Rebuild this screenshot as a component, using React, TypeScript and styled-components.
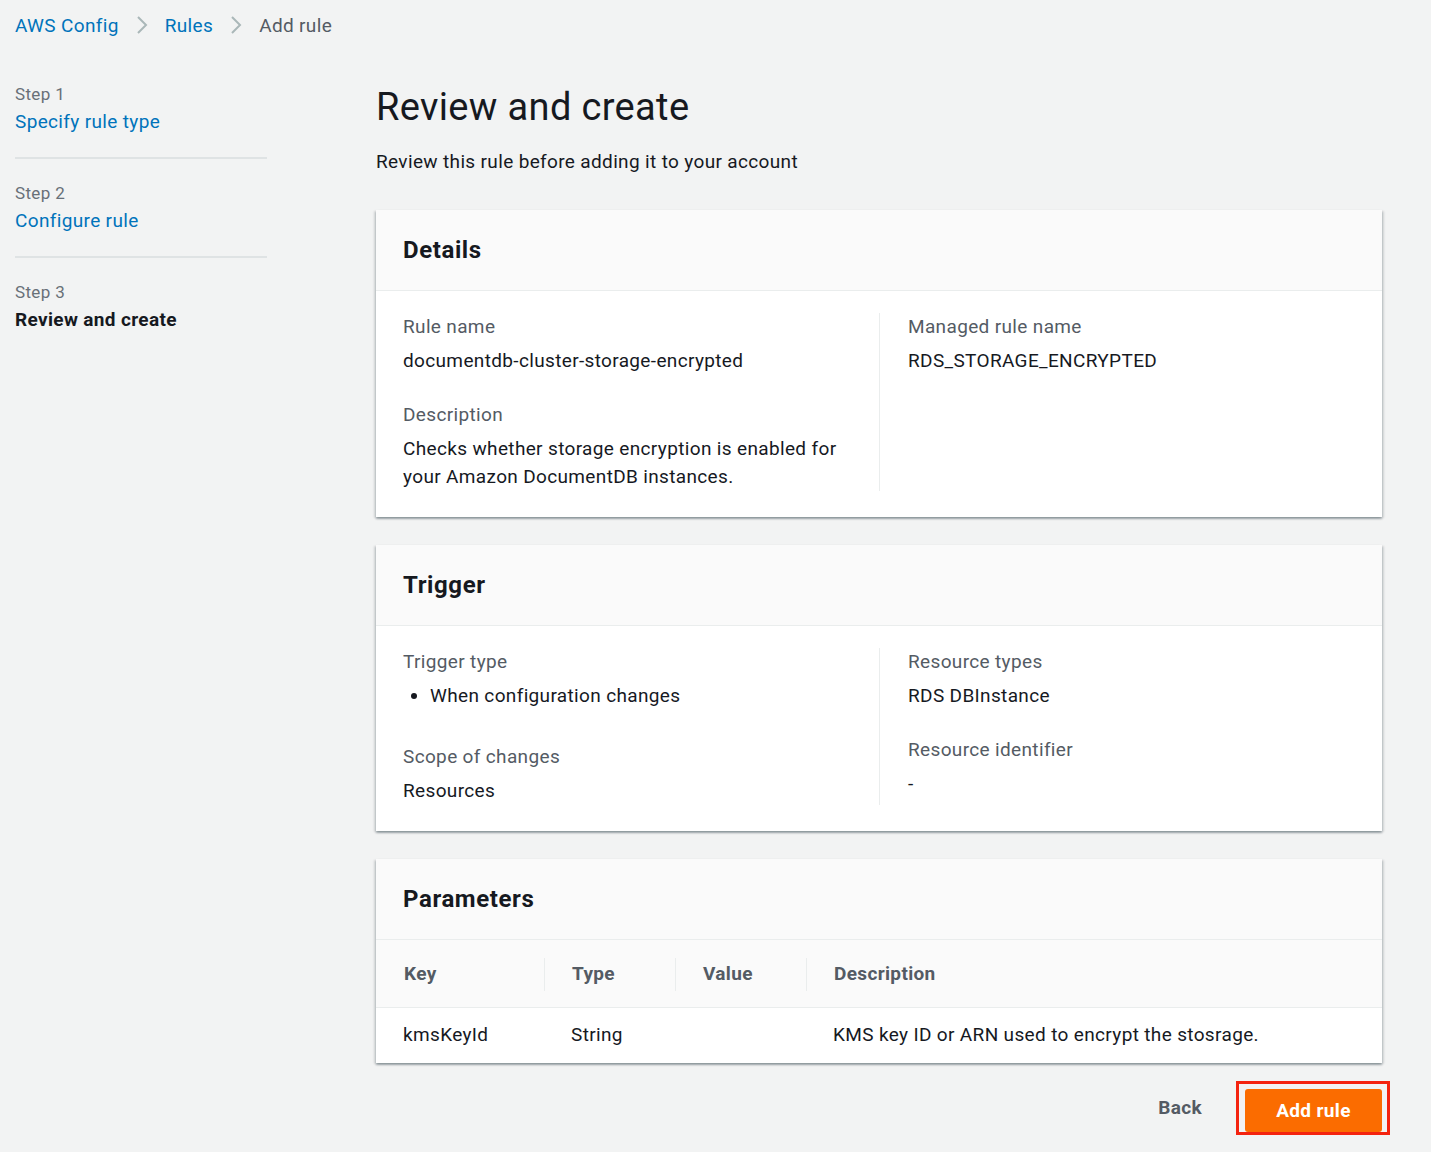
import styled, { createGlobalStyle } from 'styled-components';

const GlobalStyle = createGlobalStyle`
	body {
		margin: 0;
		background: #f2f3f3;
		font-family: Roboto, 'Liberation Sans', sans-serif;
		color: #16191f;
		letter-spacing: 0.35px;
	}
`;

const Page = styled.div`
	padding: 0 49px 0 15px;
	min-height: 1152px;
	box-sizing: border-box;
`;

const Breadcrumbs = styled.nav`
	height: 50px;
	display: flex;
	align-items: center;
	gap: 16px;
	font-size: 19px;
`;

const Crumb = styled.span<{ $current?: boolean }>`
	color: ${(p) => (p.$current ? '#545b64' : '#0073bb')};
`;

const Chevron = () => (
	<svg width="14" height="22" viewBox="0 0 14 22" fill="none">
		<path d="M3 3l8 8-8 8" stroke="#aab7b8" strokeWidth="2" />
	</svg>
);

const Layout = styled.div`
	display: grid;
	grid-template-columns: 252px 1fr;
	column-gap: 109px;
	margin-top: 9px;
`;

const Steps = styled.ol`
	list-style: none;
	margin: 1px 0 0;
	padding: 0;
`;

const Step = styled.li`
	padding: 22px 0 20px;
	border-bottom: 2px solid #dfe3e4;

	&:last-child {
		border-bottom: none;
	}
`;

const StepLabel = styled.div`
	font-size: 17px;
	line-height: 24px;
	color: #687078;
`;

const StepName = styled.div<{ $active?: boolean }>`
	font-size: 19px;
	line-height: 31px;
	color: ${(p) => (p.$active ? '#16191f' : '#0073bb')};
	font-weight: ${(p) => (p.$active ? 700 : 400)};
`;

const Main = styled.main`
	display: flex;
	flex-direction: column;
`;

const Heading = styled.h1`
	margin: 25px 0 0;
	font-size: 38px;
	line-height: 46px;
	font-weight: 400;
`;

const Subtitle = styled.p`
	margin: 18px 0 34px;
	font-size: 19px;
	line-height: 28px;
`;

const Card = styled.section`
	background: #fff;
	box-shadow: 0 2px 2px 0 rgba(0, 28, 36, 0.3), 2px 1px 2px 0 rgba(0, 28, 36, 0.12),
		-2px 1px 2px 0 rgba(0, 28, 36, 0.12);
	margin-bottom: 28px;
`;

const CardHeader = styled.header`
	height: 80px;
	display: flex;
	align-items: center;
	padding: 0 27px;
	background: #fafafa;
	border-bottom: 1px solid #eaeded;
`;

const CardTitle = styled.h2`
	margin: 0;
	font-size: 24px;
	font-weight: 700;
	letter-spacing: 0.6px;
`;

const ColumnsBody = styled.div`
	display: grid;
	grid-template-columns: 1fr 1fr;
	padding: 22px 27px 26px;
`;

const Column = styled.div<{ $divider?: boolean }>`
	display: flex;
	flex-direction: column;
	gap: 26px;
	${(p) => (p.$divider ? 'border-left: 1px solid #eaeded; padding-left: 28px;' : 'padding-right: 28px;')}
`;

const Field = styled.div`
	display: flex;
	flex-direction: column;
	gap: 6px;
`;

const Label = styled.div`
	font-size: 19px;
	line-height: 28px;
	color: #545b64;
`;

const Value = styled.div`
	font-size: 19px;
	line-height: 28px;
`;

const Bullets = styled.ul`
	margin: 0 0 7px;
	padding-left: 27px;
	font-size: 19px;
	line-height: 28px;
`;

const Table = styled.table`
	width: 100%;
	border-collapse: collapse;
	font-size: 19px;
`;

const Th = styled.th<{ $w?: number }>`
	height: 67px;
	padding: 0 28px;
	text-align: left;
	font-weight: 700;
	color: #545b64;
	background: #fafafa;
	border-bottom: 1px solid #eaeded;
	position: relative;
	box-sizing: border-box;
	${(p) => (p.$w ? `width: ${p.$w}px;` : '')}

	&:not(:first-child)::before {
		content: '';
		position: absolute;
		left: 0;
		top: 18px;
		bottom: 16px;
		border-left: 1px solid #eaeded;
	}
`;

const Td = styled.td`
	height: 55px;
	padding: 0 27px;
	line-height: 28px;
`;

const Footer = styled.div`
	display: flex;
	justify-content: flex-end;
	align-items: center;
	gap: 34px;
	margin: -10px -8px 0 0;
`;

const LinkButton = styled.button`
	background: none;
	border: none;
	padding: 0;
	font: inherit;
	font-size: 19px;
	font-weight: 700;
	letter-spacing: 0.35px;
	color: #545b64;
`;

const Highlight = styled.span`
	display: flex;
	border: 3px solid #f4230f;
	padding: 5px 5px 0 6px;
`;

const PrimaryButton = styled.button`
	display: block;
	width: 137px;
	height: 43px;
	border: none;
	border-radius: 3px;
	background: #fb6c00;
	color: #fff;
	font: inherit;
	font-size: 19px;
	font-weight: 700;
	letter-spacing: 0.35px;
`;

const App = () => (
	<Page>
		<GlobalStyle />
		<Breadcrumbs>
			<Crumb>AWS Config</Crumb>
			<Chevron />
			<Crumb>Rules</Crumb>
			<Chevron />
			<Crumb $current>Add rule</Crumb>
		</Breadcrumbs>

		<Layout>
			<Steps>
				<Step>
					<StepLabel>Step 1</StepLabel>
					<StepName>Specify rule type</StepName>
				</Step>
				<Step>
					<StepLabel>Step 2</StepLabel>
					<StepName>Configure rule</StepName>
				</Step>
				<Step>
					<StepLabel>Step 3</StepLabel>
					<StepName $active>Review and create</StepName>
				</Step>
			</Steps>

			<Main>
				<Heading>Review and create</Heading>
				<Subtitle>Review this rule before adding it to your account</Subtitle>

				<Card>
					<CardHeader>
						<CardTitle>Details</CardTitle>
					</CardHeader>
					<ColumnsBody>
						<Column>
							<Field>
								<Label>Rule name</Label>
								<Value>documentdb-cluster-storage-encrypted</Value>
							</Field>
							<Field>
								<Label>Description</Label>
								<Value>
									Checks whether storage encryption is enabled for
									<br />
									your Amazon DocumentDB instances.
								</Value>
							</Field>
						</Column>
						<Column $divider>
							<Field>
								<Label>Managed rule name</Label>
								<Value>RDS_STORAGE_ENCRYPTED</Value>
							</Field>
						</Column>
					</ColumnsBody>
				</Card>

				<Card>
					<CardHeader>
						<CardTitle>Trigger</CardTitle>
					</CardHeader>
					<ColumnsBody>
						<Column>
							<Field>
								<Label>Trigger type</Label>
								<Bullets>
									<li>When configuration changes</li>
								</Bullets>
							</Field>
							<Field>
								<Label>Scope of changes</Label>
								<Value>Resources</Value>
							</Field>
						</Column>
						<Column $divider>
							<Field>
								<Label>Resource types</Label>
								<Value>RDS DBInstance</Value>
							</Field>
							<Field>
								<Label>Resource identifier</Label>
								<Value>-</Value>
							</Field>
						</Column>
					</ColumnsBody>
				</Card>

				<Card>
					<CardHeader>
						<CardTitle>Parameters</CardTitle>
					</CardHeader>
					<Table>
						<thead>
							<tr>
								<Th $w={168}>Key</Th>
								<Th $w={131}>Type</Th>
								<Th $w={131}>Value</Th>
								<Th>Description</Th>
							</tr>
						</thead>
						<tbody>
							<tr>
								<Td>kmsKeyId</Td>
								<Td>String</Td>
								<Td></Td>
								<Td>KMS key ID or ARN used to encrypt the stosrage.</Td>
							</tr>
						</tbody>
					</Table>
				</Card>

				<Footer>
					<LinkButton>Back</LinkButton>
					<Highlight>
						<PrimaryButton>Add rule</PrimaryButton>
					</Highlight>
				</Footer>
			</Main>
		</Layout>
	</Page>
);

export default App;
